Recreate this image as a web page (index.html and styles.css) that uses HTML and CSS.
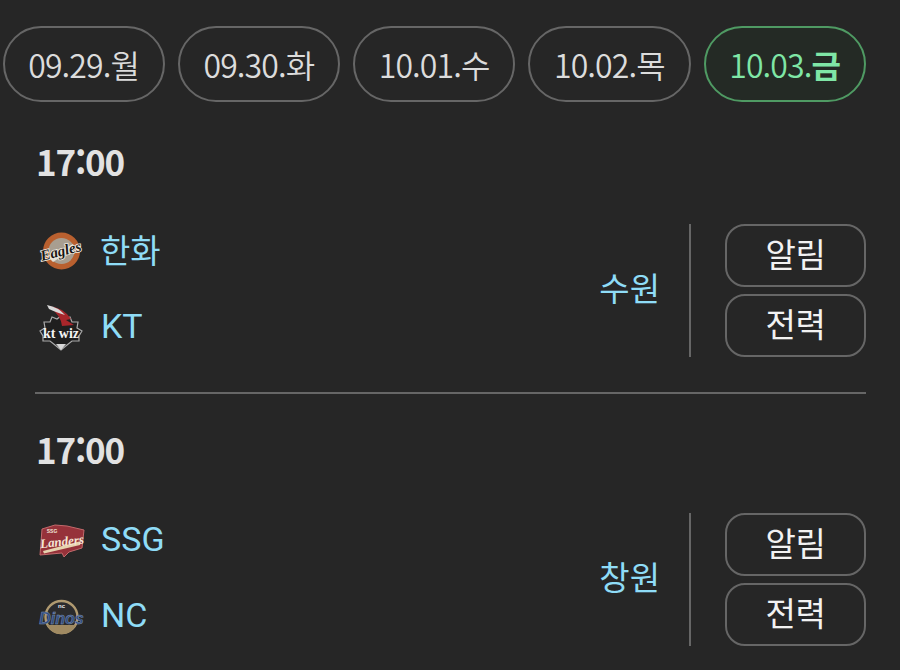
FILE: index.html
```html
<!DOCTYPE html>
<html lang="ko">
<head>
<meta charset="utf-8">
<title>경기 일정</title>
<link rel="stylesheet" href="styles.css">
</head>
<body>
<main class="page">
  <nav class="dates">
    <a class="chip">09.29.월</a>
    <a class="chip">09.30.화</a>
    <a class="chip">10.01.수</a>
    <a class="chip">10.02.목</a>
    <a class="chip chip-active">10.03.<b>금</b></a>
  </nav>

  <section class="game game-first">
    <h2 class="time">17:00</h2>
    <div class="match">
      <div class="teams">
        <div class="team">
          <svg class="logo" viewBox="0 0 48 48">
            <circle cx="24.500" cy="25" r="18.500" fill="#b9602f"/>
            <circle cx="24.500" cy="25" r="13" fill="#a89e90"/>
            <path d="M12 32 L36 18 L38 22 L16 36 Z" fill="#e4dfd4"/>
            <text class="logo-script" x="24" y="30" font-size="15" fill="#191614" stroke="#f2eee4" stroke-width="1.600" paint-order="stroke" transform="rotate(-14 24 26)">Eagles</text>
          </svg>
          <span class="name">한화</span>
        </div>
        <div class="team">
          <svg class="logo" viewBox="0 0 48 48">
            <path d="M24 13 L28 16 L33 14 L35 19 L41 19 L40 25 L45 28 L42 33 L42 38 L35 38 L30 42 L24 47 L18 42 L13 38 L6 38 L6 33 L3 28 L8 25 L7 19 L13 19 L15 14 L20 16 Z" fill="#1f1f1f" stroke="#a9a9a9" stroke-width="1.200"/>
            <path d="M29 41 L24 47 L19 41 Z" fill="#d8d8d8"/>
            <path d="M11 3 Q26 4 34 16 L29 17 L37 22 L25 23 Q24 12 11 3 Z" fill="#a8262b"/>
            <path d="M10 2 Q21 4 28 12 Q18 9 12 6 Z" fill="#d9d9d9"/>
            <text class="logo-slab" x="24" y="35" font-size="14" fill="#f4f4f4">kt wiz</text>
          </svg>
          <span class="name name-latin">KT</span>
        </div>
      </div>
      <div class="venue">수원</div>
      <div class="actions">
        <button class="action">알림</button>
        <button class="action">전력</button>
      </div>
    </div>
  </section>

  <section class="game">
    <h2 class="time">17:00</h2>
    <div class="match">
      <div class="teams">
        <div class="team">
          <svg class="logo" viewBox="0 0 48 48">
            <path d="M5 14 L18 10 L30 11 L47 15 L45 33 L32 37 L27 42 L25 38 L3 40 Z" fill="#96323a" stroke="#c26a6c" stroke-width="1"/>
            <path d="M6 36 L44 26 L43 30 L7 38.500 Z" fill="#e6d3ae"/>
            <text class="logo-script" x="25" y="31" font-size="13" fill="#f5e6d6" transform="rotate(-6 24 27)">Landers</text>
            <text class="logo-sans" x="15" y="18" font-size="5" fill="#f0e3d6">SSG</text>
          </svg>
          <span class="name name-latin name-raised">SSG</span>
        </div>
        <div class="team">
          <svg class="logo" viewBox="0 0 48 48">
            <circle cx="24.500" cy="25" r="16" fill="#2b2b2d" stroke="#b09a70" stroke-width="2.400"/>
            <path d="M10 33 A16 16 0 0 0 39 33 Z" fill="#a08a62"/>
            <text class="logo-sans" x="24.500" y="15.500" font-size="6" fill="#e8e8e8">nc</text>
            <text class="logo-dinos" x="24.500" y="32" font-size="16" fill="#2f4a7d" stroke="#7f93b6" stroke-width=".5">Dinos</text>
          </svg>
          <span class="name name-latin">NC</span>
        </div>
      </div>
      <div class="venue">창원</div>
      <div class="actions">
        <button class="action">알림</button>
        <button class="action">전력</button>
      </div>
    </div>
  </section>
</main>
</body>
</html>
```

FILE: styles.css
```css
* {
  box-sizing: border-box;
}

html,
body {
  margin: 0;
  height: 100%;
  overflow: hidden;
}

body {
  background: #262626;
  font-family: "Noto Sans CJK KR", "Noto Sans", sans-serif;
}

.page {
  padding: 26px 34px 0 35px;
}

.dates {
  display: flex;
  gap: 13px;
  margin-left: -32.500px;
}

.chip {
  flex: 0 0 162.250px;
  height: 76px;
  display: flex;
  align-items: center;
  justify-content: center;
  border: 2px solid #666;
  border-radius: 38px;
  color: #dcdcdc;
  font-size: 32px;
  font-weight: 350;
  letter-spacing: -0.900px;
}

.chip-active {
  border-color: #4f9a63;
  background: #242a25;
  color: #7fe6a6;
}

.chip-active b {
  font-weight: 700;
}

.game {
  padding-top: 32px;
}

.game-first {
  padding-top: 36px;
  padding-bottom: 35px;
  border-bottom: 2px solid #666;
}

.time {
  margin: 0 0 37px 1px;
  height: 50px;
  line-height: 46px;
  color: #e2e2e2;
  font-size: 35px;
  font-weight: 700;
  letter-spacing: -1.200px;
}

.game-first .time {
  margin-bottom: 36px;
}

.match {
  display: flex;
  align-items: stretch;
  height: 133px;
}

.teams {
  flex: 1;
  display: flex;
  flex-direction: column;
  gap: 29px;
  padding-top: 2px;
}

.team {
  display: flex;
  align-items: center;
  gap: 15px;
  height: 48px;
}

.logo {
  width: 48px;
  height: 48px;
  flex: none;
  margin-left: 2px;
  overflow: visible;
}

.logo-script {
  font-family: "Liberation Serif", serif;
  font-style: italic;
  font-weight: 700;
  text-anchor: middle;
}

.logo-sans {
  font-family: "Liberation Sans", sans-serif;
  font-weight: 700;
  text-anchor: middle;
}

.logo-slab {
  font-family: "Liberation Serif", serif;
  font-weight: 700;
  text-anchor: middle;
}

.logo-dinos {
  font-family: "Liberation Sans", sans-serif;
  font-style: italic;
  font-weight: 700;
  text-anchor: middle;
}

.name {
  margin-bottom: 3px;
  color: #8fdcf7;
  font-size: 33px;
  font-weight: 400;
}

.name-latin {
  margin-bottom: 2px;
  margin-left: 1px;
  font-family: Roboto, "Noto Sans", sans-serif;
  font-size: 34px;
}

.name-raised {
  margin-bottom: 0;
}

.venue {
  display: flex;
  align-items: center;
  padding-right: 29px;
  margin-top: -8px;
  color: #8fdcf7;
  font-size: 33px;
  font-weight: 400;
}

.actions {
  flex: none;
  display: flex;
  flex-direction: column;
  gap: 7px;
  padding-left: 34px;
  border-left: 2px solid #666;
}

.action {
  width: 141px;
  height: 63px;
  padding: 0 0 6px;
  border: 2px solid #666;
  border-radius: 20px;
  background: transparent;
  color: #f2f2f2;
  font-family: inherit;
  font-size: 33px;
  font-weight: 400;
  letter-spacing: -0.300px;
}
```
